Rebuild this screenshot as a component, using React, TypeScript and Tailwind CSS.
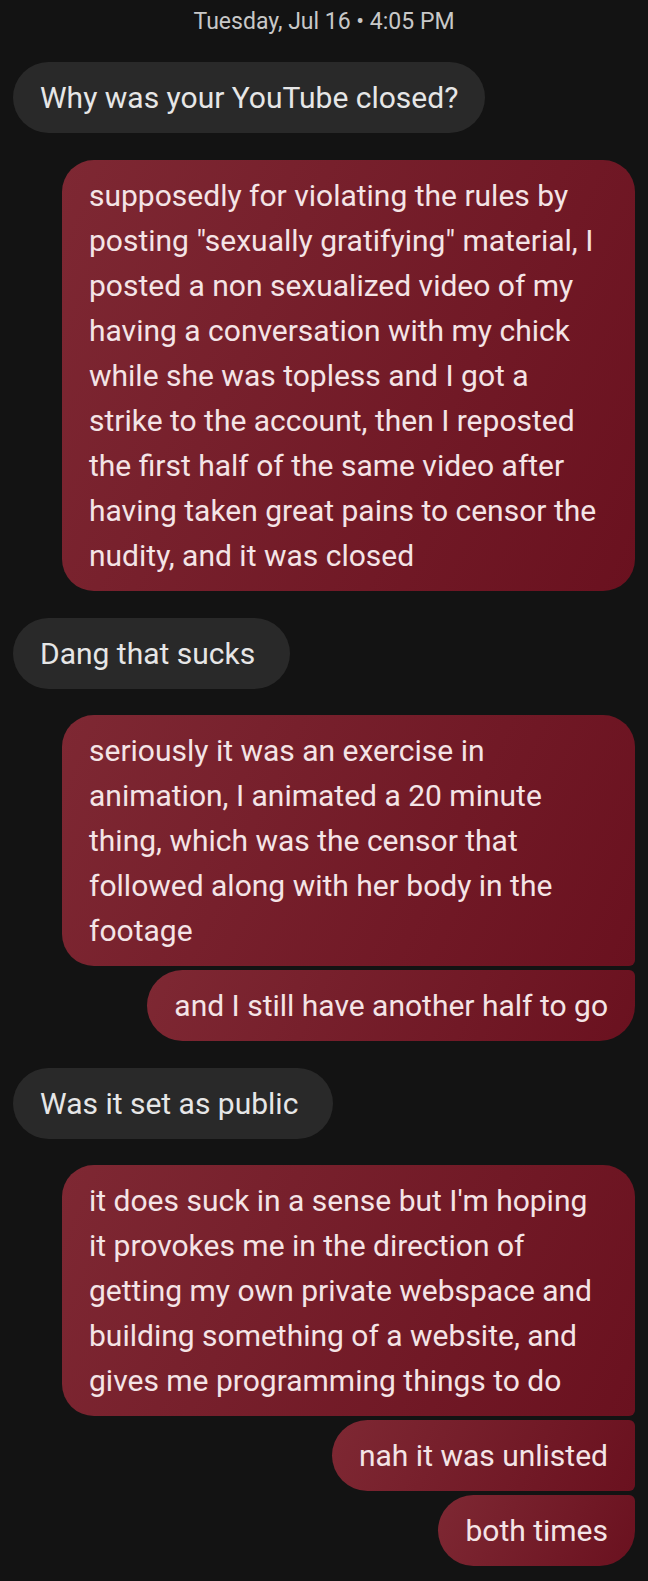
type Message = { lines: string[]; sent?: boolean; shape: string; gap: string };

const messages: Message[] = [
  { lines: ["Why was your YouTube closed?"], shape: "pr-[27px]", gap: "mt-0" },
  {
    lines: [
      "supposedly for violating the rules by",
      'posting "sexually gratifying" material, I',
      "posted a non sexualized video of my",
      "having a conversation with my chick",
      "while she was topless and I got a",
      "strike to the account, then I reposted",
      "the first half of the same video after",
      "having taken great pains to censor the",
      "nudity, and it was closed",
    ],
    sent: true,
    shape: "self-stretch rounded-[32px]",
    gap: "mt-[27px]",
  },
  { lines: ["Dang that sucks"], shape: "pr-[35px]", gap: "mt-[27px]" },
  {
    lines: [
      "seriously it was an exercise in",
      "animation, I animated a 20 minute",
      "thing, which was the censor that",
      "followed along with her body in the",
      "footage",
    ],
    sent: true,
    shape: "self-stretch rounded-[32px] rounded-br-[6px]",
    gap: "mt-[26px]",
  },
  {
    lines: ["and I still have another half to go"],
    sent: true,
    shape: "self-end rounded-[36px] rounded-tr-[6px]",
    gap: "mt-[4px]",
  },
  { lines: ["Was it set as public"], shape: "pr-[35px]", gap: "mt-[27px]" },
  {
    lines: [
      "it does suck in a sense but I'm hoping",
      "it provokes me in the direction of",
      "getting my own private webspace and",
      "building something of a website, and",
      "gives me programming things to do",
    ],
    sent: true,
    shape: "self-stretch rounded-[32px] rounded-br-[6px]",
    gap: "mt-[26px]",
  },
  { lines: ["nah it was unlisted"], sent: true, shape: "self-end rounded-[36px] rounded-r-[6px]", gap: "mt-[4px]" },
  { lines: ["both times"], sent: true, shape: "self-end rounded-[36px] rounded-tr-[6px]", gap: "mt-[4px]" },
];

function Bubble({ lines, sent, shape, gap }: Message) {
  const side = sent
    ? "ml-[49px] pr-[27px] bg-linear-[115deg,#7e2833,#6a111f] text-[#f4e4e6]"
    : "self-start rounded-[36px] bg-[#292929] text-[#e6e6e6]";
  return (
    <li className={`${gap} ${side} ${shape} py-[13px] pl-[27px]`}>
      <p>
        {lines.map((line) => (
          <span key={line} className="block whitespace-nowrap">
            {line}
          </span>
        ))}
      </p>
    </li>
  );
}

export default function App() {
  return (
    <main className="min-h-screen bg-[#131313] px-[13px] pb-[13px] font-['Roboto','Open_Sans',sans-serif] text-[30px] leading-[45px]">
      <time className="block pt-[7px] text-center text-[23px] leading-[30px] text-[#c8c8c8]">
        Tuesday, Jul 16 • 4:05 PM
      </time>
      <ol className="mt-[25px] flex flex-col">
        {messages.map((message) => (
          <Bubble key={message.lines[0]} {...message} />
        ))}
      </ol>
    </main>
  );
}
